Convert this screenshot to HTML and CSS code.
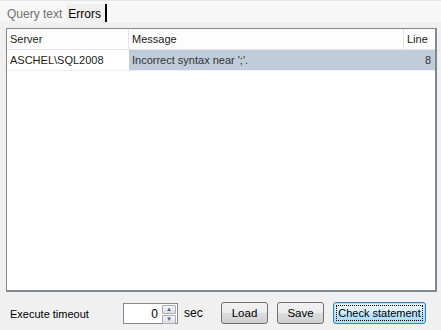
FILE: index.html
```html
<!DOCTYPE html>
<html lang="en">
<head>
    <meta charset="UTF-8">
    <title>Check statement</title>
    <link rel="stylesheet" href="styles.css">
</head>
<body>
    <div class="tabs">
        <div class="tab">Query text</div>
        <div class="tab active">Errors</div>
    </div>

    <div class="panel">
        <div class="grid">
            <div class="grid-row head">
                <div class="cell c-server">Server</div>
                <div class="cell c-msg">Message</div>
                <div class="cell c-line">Line</div>
            </div>
            <div class="grid-row">
                <div class="cell c-server">ASCHEL\SQL2008</div>
                <div class="cell c-msg selected">Incorrect syntax near ';'.</div>
                <div class="cell c-line selected num">8</div>
            </div>
        </div>

        <!-- Bottom toolbar -->
        <div class="toolbar">
            <span class="label">Execute timeout</span>
            <div class="spin">
                <span class="spin-value">0</span>
                <div class="spin-buttons">
                    <span class="spin-btn">&#9650;</span>
                    <span class="spin-btn">&#9660;</span>
                </div>
            </div>
            <span class="unit">sec</span>
            <button class="btn">Load</button>
            <button class="btn">Save</button>
            <button class="btn wide focused"><span>Check statement</span></button>
        </div>
    </div>
</body>
</html>
```

FILE: styles.css
```css
* {
    margin: 0;
    padding: 0;
    box-sizing: border-box;
}

body {
    width: 441px;
    height: 330px;
    background: #f0f0f0;
    font-family: "Liberation Sans", Arial, sans-serif;
    font-size: 11px;
    color: #000;
    overflow: hidden;
}

/* Tabs */
.tabs {
    display: flex;
    height: 22px;
    padding-top: 3px;
    background: #f7f7f7;
    border-top: 1px solid #e4e4e4;
}

.tab {
    padding: 3px 4px 0 7px;
    color: #707070;
    font-size: 12px;
}

.tab.active {
    color: #000;
    background: #f0f0f0;
    padding: 3px 4px 0 2px;
    border-right: 2px solid #000;
}

/* Panel */
.panel {
    padding: 6px 4px 0 6px;
}

.grid {
    height: 264px;
    background: #fff;
    border: 1px solid #828790;
    border-right-width: 2px;
    border-bottom-width: 2px;
}

.grid-row {
    display: flex;
    height: 21px;
    border-bottom: 1px solid #f0f0f0;
}

.grid-row.head {
    height: 21px;
    background: #fdfdfd;
    border-bottom: 1px solid #e5e5e5;
}

.cell {
    padding: 4px 3px 0 3px;
    white-space: nowrap;
    color: #1a1a1a;
}

.head .cell {
    border-right: 1px solid #e5e5e5;
}

.head .c-line {
    border-right: none;
}

.c-server {
    width: 122px;
}

.c-msg {
    width: 275px;
}

.c-line {
    flex: 1;
}

.selected {
    background: #bfcddb;
    color: #333;
}

.num {
    text-align: right;
    padding-right: 4px;
}

/* Toolbar */
.toolbar {
    display: flex;
    align-items: center;
    height: 42px;
    padding-left: 4px;
}

.toolbar > * {
    flex-shrink: 0;
}

.label {
    width: 113px;
    padding-top: 1px;
}

.spin {
    display: flex;
    width: 55px;
    height: 21px;
    background: #fff;
    border: 1px solid #828790;
}

.spin-value {
    flex: 1;
    text-align: right;
    padding: 3px 4px 0 0;
    font-size: 12px;
}

.spin-buttons {
    display: flex;
    flex-direction: column;
    width: 15px;
    padding: 1px 1px 1px 0;
    gap: 1px;
}

.spin-btn {
    flex: 1;
    font-size: 6px;
    line-height: 7px;
    text-align: center;
    color: #4d6185;
    background: linear-gradient(#f6f6f6, #dedede);
    border: 1px solid #a8aeb8;
    border-radius: 1px;
}

.unit {
    margin-left: 6px;
    width: 37px;
    font-size: 12px;
}

.btn {
    width: 47px;
    height: 22px;
    margin-right: 9px;
    font-family: inherit;
    font-size: 11.5px;
    color: #000;
    border: 1px solid #707070;
    border-radius: 3px;
    background: linear-gradient(#f2f2f2 0%, #ebebeb 50%, #dddddd 51%, #cfcfcf 100%);
}

.btn.wide {
    width: 93px;
}

.btn.focused {
    padding: 2px;
    border-color: #3c7fb1;
    background: linear-gradient(#eaf6fd 0%, #d9f0fc 50%, #bee6fd 51%, #a7d9f5 100%);
    box-shadow: inset 0 0 0 1px #a9e3fc;
}

.btn.focused span {
    display: block;
    height: 16px;
    line-height: 14px;
    font-size: 11px;
    white-space: nowrap;
    border: 1px dotted #000;
}
```
